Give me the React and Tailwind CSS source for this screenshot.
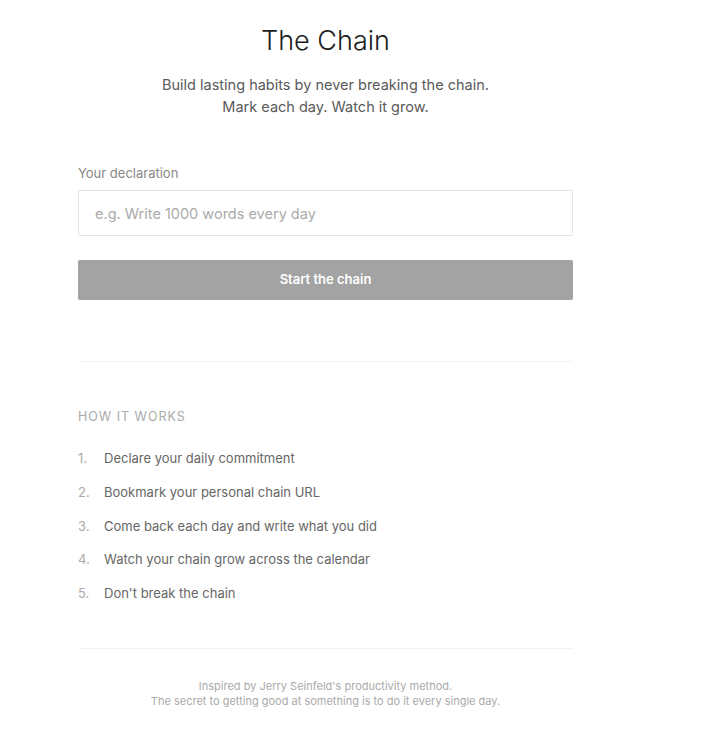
import { useState } from "react";

const steps = [
  "Declare your daily commitment",
  "Bookmark your personal chain URL",
  "Come back each day and write what you did",
  "Watch your chain grow across the calendar",
  "Don't break the chain",
];

export default function App() {
  const [declaration, setDeclaration] = useState("");

  return (
    <div
      className="min-h-screen bg-white"
      style={{ fontFamily: "Inter, 'Liberation Sans', sans-serif" }}
    >
      <div className="ml-[78px] w-[495px] pt-[23px] pb-10">
        <h1 className="text-center text-[27px] leading-9 font-light text-[#1c1c1c]">
          The Chain
        </h1>
        <p className="mt-[15px] text-center text-[14.5px] leading-[22px] text-[#5a5a5a]">
          Build lasting habits by never breaking the chain.
          <br />
          Mark each day. Watch it grow.
        </p>

        {/* form */}
        <div className="mt-[45px]">
          <label className="block text-[13px] leading-5 text-[#888] mb-[7px]">
            Your declaration
          </label>
          <input
            type="text"
            value={declaration}
            onChange={(e) => setDeclaration(e.target.value)}
            placeholder="e.g. Write 1000 words every day"
            className="w-full h-[46px] border border-[#e4e4e4] rounded-[2px] px-4 text-[14.5px] text-[#333] placeholder:text-[#aaa] focus:outline-none"
          />
          <button
            type="button"
            className="mt-6 w-full h-10 rounded-[2px] bg-[#a3a3a3] text-white text-[13px] font-semibold"
          >
            Start the chain
          </button>
        </div>

        <div className="mt-[61px] border-t border-[#f2f2f2]" />

        {/* how it works */}
        <h2 className="mt-[45px] text-[12.5px] leading-5 tracking-[0.08em] text-[#aaa]">
          HOW IT WORKS
        </h2>
        <ol className="mt-[21px] flex flex-col gap-[13.75px]">
          {steps.map((step, i) => (
            <li key={i} className="flex text-[13px] leading-5 text-[#666]">
              <span className="w-[26px] text-[#aaa]">{i + 1}.</span>
              {step}
            </li>
          ))}
        </ol>

        <div className="mt-[45px] border-t border-[#f2f2f2]" />

        <p className="mt-[30px] text-center text-[11px] leading-[15px] text-[#aaa]">
          Inspired by Jerry Seinfeld's productivity method.
          <br />
          The secret to getting good at something is to do it every single day.
        </p>
      </div>
    </div>
  );
}
